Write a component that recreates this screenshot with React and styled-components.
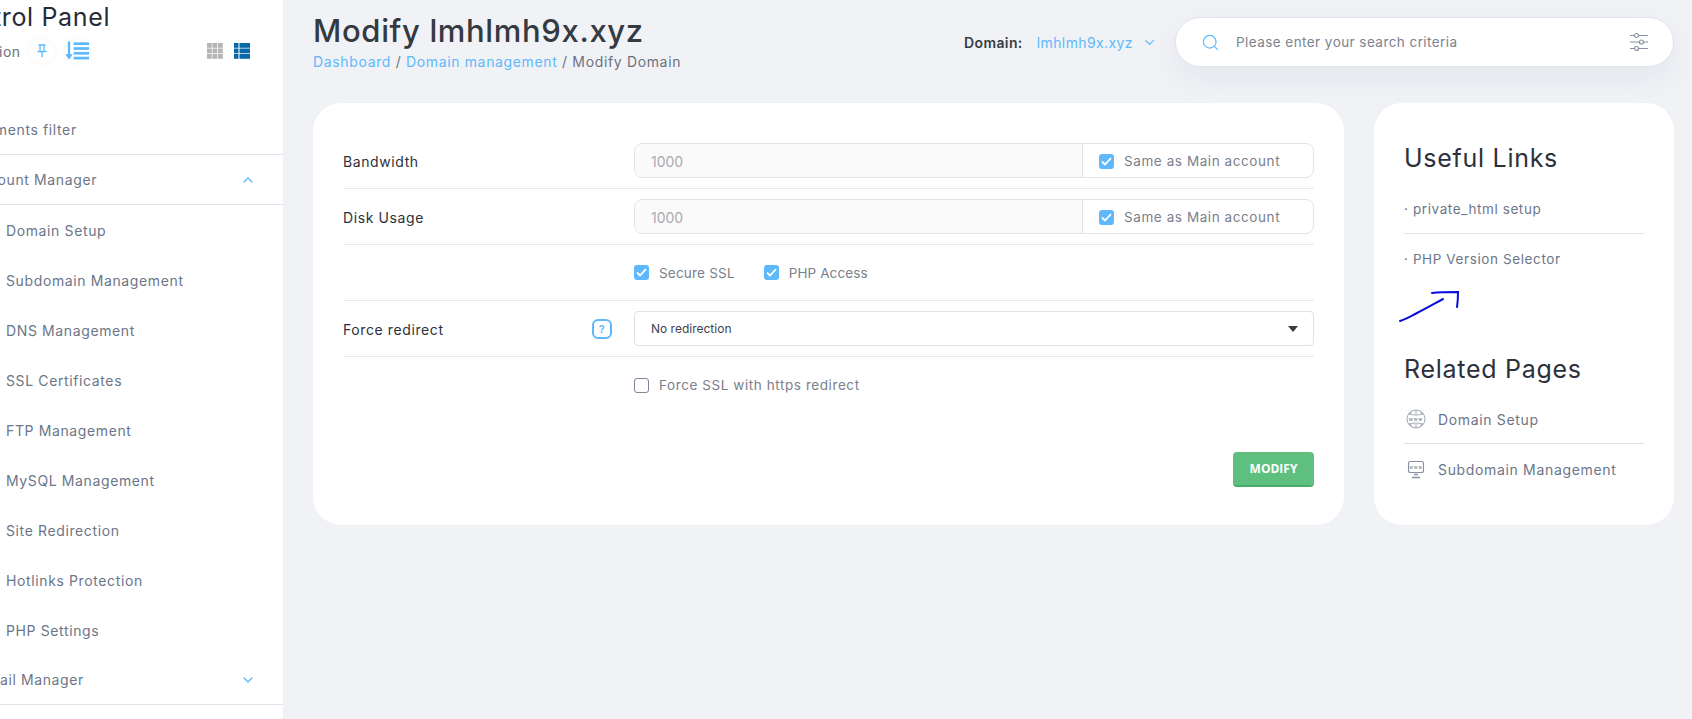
import React from "react";
import styled, { createGlobalStyle } from "styled-components";
import { ChevronDown, ChevronUp, Search } from "lucide-react";

const BLUE = "#5db9fb";
const font = `Inter, "Noto Sans", sans-serif`;

const Global = createGlobalStyle`
  html, body { margin: 0; padding: 0; height: 100%; overflow: hidden; background: #f1f2f6; }
  * { box-sizing: border-box; }
  body { font-family: ${font}; }
`;

const Page = styled.div`
  display: flex;
  height: 719px;
  background: #f1f2f6;
`;

const Sidebar = styled.aside`
  width: 283px;
  flex: none;
  background: #fff;
  overflow: hidden;
`;

const SidebarInner = styled.div`
  width: 343px;
  margin-left: -60px;
`;

const BrandBlock = styled.div`
  height: 105px;
  padding-top: 2px;
`;

const Brand = styled.div`
  font-size: 25px;
  line-height: 30px;
  font-weight: 400;
  color: #262b36;
  letter-spacing: 0.65px;
  padding-left: 3px;
`;

const BrandTools = styled.div`
  display: flex;
  align-items: center;
  margin-top: 3px;
  height: 32px;
  padding-left: 5px;
  padding-right: 33px;
`;

const BrandSub = styled.span`
  font-size: 14px;
  color: #6b7280;
  letter-spacing: 0.5px;
`;

const RoundIcon = styled.span`
  width: 24px;
  height: 24px;
  flex: none;
  border-radius: 50%;
  background: #fff;
  box-shadow: 0 0 6px rgba(120, 130, 150, 0.08);
  display: flex;
  align-items: center;
  justify-content: center;
  margin-left: ${(p) => p.$gap}px;
`;

const ViewIcons = styled.div`
  margin-left: auto;
  display: flex;
  gap: 11px;
`;

const MenuRow = styled.div`
  display: flex;
  align-items: center;
  justify-content: space-between;
  height: 50px;
  padding-left: ${(p) => p.$indent}px;
  padding-right: 27px;
  font-size: 14px;
  color: #6c7689;
  letter-spacing: 0.62px;
  border-bottom: ${(p) => (p.$line ? "1px solid #dfe3ec" : "none")};
`;

const Main = styled.main`
  flex: 1;
  padding: 0 18px 0 30px;
  min-width: 0;
`;

const Header = styled.header`
  display: flex;
  justify-content: space-between;
  height: 103px;
`;

const TitleBlock = styled.div`
  padding-top: 12px;
`;

const Title = styled.h1`
  margin: 0;
  font-size: 31px;
  line-height: 38px;
  font-weight: 500;
  color: #343a42;
  letter-spacing: 0.65px;
`;

const Crumbs = styled.div`
  margin-top: 3px;
  font-size: 14px;
  line-height: 18px;
  color: #6b7280;
  letter-spacing: 0.65px;
`;

const Crumb = styled.span`
  color: ${BLUE};
`;

const HeaderRight = styled.div`
  display: flex;
  align-items: flex-start;
`;

const DomainPick = styled.div`
  display: flex;
  align-items: center;
  height: 50px;
  margin-top: 17px;
  font-size: 14px;
  margin-right: 18px;
`;

const DomainLabel = styled.span`
  font-weight: 600;
  color: #363c46;
  letter-spacing: 0.4px;
  margin-right: 14px;
`;

const DomainValue = styled.span`
  color: ${BLUE};
  letter-spacing: 0.4px;
  margin-right: 9px;
`;

const SearchBar = styled.div`
  width: 499px;
  height: 50px;
  margin-top: 17px;
  display: flex;
  align-items: center;
  background: #fff;
  border: 1px solid #dfe3ec;
  border-radius: 25px;
  padding: 0 24px 0 25px;
  box-shadow: 0 12px 30px rgba(150, 155, 175, 0.12);
  font-size: 13.5px;
  color: #7d8390;
  letter-spacing: 0.44px;
`;

const SearchText = styled.span`
  margin-left: 16px;
  flex: 1;
`;

const Content = styled.div`
  display: flex;
  gap: 30px;
  align-items: flex-start;
`;

const Card = styled.section`
  background: #fff;
  border-radius: 28px;
  height: 422px;
`;

const FormCard = styled(Card)`
  width: 1031px;
  padding: 40px 30px 38px;
  display: flex;
  flex-direction: column;
`;

const Row = styled.div`
  display: grid;
  grid-template-columns: 291px 1fr;
  align-items: center;
  padding: ${(p) => (p.$first ? "0 0 10px" : "10px 0")};
  min-height: ${(p) => (p.$first ? 46 : 56)}px;
  border-bottom: ${(p) => (p.$plain ? "none" : "1px solid #e8e9ec")};
`;

const Label = styled.div`
  display: flex;
  align-items: center;
  justify-content: space-between;
  padding: 1px 22px 0 0;
  font-size: 14px;
  color: #2c313c;
  letter-spacing: 0.6px;
`;

const HelpBadge = styled.span`
  width: 20px;
  height: 20px;
  margin-top: -1px;
  border: 2px solid ${BLUE};
  border-radius: 6px;
  display: flex;
  align-items: center;
  justify-content: center;
  color: ${BLUE};
  font-size: 11px;
  font-weight: 600;
`;

const InputGroup = styled.div`
  display: flex;
  height: 35px;
  border: 1px solid #e3e4e6;
  border-radius: 8px;
  overflow: hidden;
`;

const ValueField = styled.div`
  width: 448px;
  background: #fafafa;
  padding: 1px 0 0 16px;
  display: flex;
  align-items: center;
  color: #a9abaf;
  font-size: 14px;
  border-right: 1px solid #e3e4e6;
`;

const SameAs = styled.div`
  flex: 1;
  display: flex;
  align-items: center;
  padding: 1px 0 0 16px;
`;

const CheckLine = styled.div`
  display: flex;
  align-items: center;
  gap: 29px;
`;

const CheckLabel = styled.label`
  display: flex;
  align-items: center;
  gap: 10px;
  font-size: 13.5px;
  color: #7a808c;
  letter-spacing: ${(p) => p.$spacing ?? 0.58}px;
`;

const Box = styled.span`
  width: 15px;
  height: 15px;
  border-radius: 3px;
  flex: none;
  display: flex;
  align-items: center;
  justify-content: center;
  background: ${(p) => (p.$on ? BLUE : "#fff")};
  border: ${(p) => (p.$on ? "none" : "1px solid #7d8596")};
`;

const Select = styled.div`
  height: 35px;
  border: 1px solid #dfe0e3;
  border-radius: 4px;
  display: flex;
  align-items: center;
  justify-content: space-between;
  padding: 0 15px 0 16px;
  font-size: 12px;
  color: #3f444e;
`;

const Caret = styled.span`
  width: 0;
  height: 0;
  border-left: 5.5px solid transparent;
  border-right: 5.5px solid transparent;
  border-top: 6px solid #3a3d45;
`;

const ButtonRow = styled.div`
  margin-top: auto;
  display: flex;
  justify-content: flex-end;
`;

const ModifyButton = styled.button`
  width: 81px;
  height: 35px;
  border: none;
  border-bottom: 2px solid #47ad6b;
  border-radius: 4px;
  background: #5fbf7f;
  color: #fff;
  font-family: "Open Sans", sans-serif;
  font-weight: 700;
  font-size: 12px;
  padding: 0;
`;

const SideCard = styled(Card)`
  width: 300px;
  padding: 40px 30px 0 30px;
`;

const SideTitle = styled.h2`
  margin: 0;
  font-size: 25px;
  line-height: 30px;
  font-weight: 400;
  color: #2c313c;
  letter-spacing: 0.72px;
`;

const SideLink = styled.div`
  display: flex;
  align-items: center;
  gap: 12px;
  height: ${(p) => p.$h}px;
  font-size: ${(p) => (p.$big ? 14 : 13.5)}px;
  color: #6c7689;
  letter-spacing: ${(p) => (p.$big ? 0.66 : 0.6)}px;
  border-bottom: ${(p) => (p.$line ? "1px solid #dfe3ec" : "none")};

  svg {
    margin-left: 2px;
  }
`;

const LinkList = styled.div`
  margin-top: ${(p) => p.$top}px;
`;

const Scribble = styled.svg`
  display: block;
  width: 60px;
  height: 32px;
  margin: 7px 0 0 -5px;
`;

const SecondTitle = styled(SideTitle)`
  margin-top: 31px;
`;

const Check = () => (
  <svg width="11" height="9" viewBox="0 0 11 9" fill="none">
    <path d="M1 4.5l3 3L10 1.2" stroke="#fff" strokeWidth="1.8" />
  </svg>
);

const PinIcon = () => (
  <svg width="12" height="14" viewBox="0 0 12 14" fill="none" stroke={BLUE} strokeWidth="1.3">
    <path d="M2.5 1h7M4 1v5.5M8 1v5.5M1.5 7.5h9M6 7.5V13.5" />
  </svg>
);

const SortIcon = () => (
  <svg width="25" height="20" viewBox="0 0 25 20" fill={BLUE}>
    <rect x="3" y="0" width="2.4" height="15" />
    <path d="M0.3 13.5h7.8L4.2 19z" />
    <rect x="9" y="1" width="16" height="2.8" />
    <rect x="9" y="6" width="16" height="2.8" />
    <rect x="9" y="11" width="16" height="2.8" />
    <rect x="9" y="16" width="16" height="2.8" />
  </svg>
);

const GridIcon = () => (
  <svg width="16" height="16" viewBox="0 0 16 16" fill="#b5b5b5">
    {[0, 5.5, 11].flatMap((y) =>
      [0, 5.5, 11].map((x) => <rect key={`${x}-${y}`} x={x} y={y} width="4.8" height="4.8" />)
    )}
  </svg>
);

const ListIcon = () => (
  <svg width="16" height="16" viewBox="0 0 16 16" fill="#0b68a8">
    {[0, 5.5, 11].map((y) => (
      <g key={y}>
        <rect x="0" y={y} width="4.5" height="4.8" />
        <rect x="5.5" y={y} width="10.5" height="4.8" />
      </g>
    ))}
  </svg>
);

const SlidersIcon = () => (
  <svg width="20" height="20" viewBox="0 0 20 20" fill="none" stroke="#8a90a0" strokeWidth="1.2">
    <path d="M1 3.5h4.5M9.5 3.5H19M1 10h9.5M14.5 10H19M1 16.5h4.5M9.5 16.5H19" />
    <circle cx="7.5" cy="3.5" r="2" />
    <circle cx="12.5" cy="10" r="2" />
    <circle cx="7.5" cy="16.5" r="2" />
  </svg>
);

const GlobeIcon = () => (
  <svg width="20" height="20" viewBox="0 0 20 20" fill="none" stroke="#8a90a0" strokeWidth="0.8">
    <circle cx="10" cy="10" r="9" />
    <path d="M10 1v4M10 15v4M3 4.5c4 2 10 2 14 0M3 15.5c4-2 10-2 14 0M6 2.5c-1.2 1-2 2-2.4 3.5M14 2.5c1.2 1 2 2 2.4 3.5M6 17.5c-1.2-1-2-2-2.4-3.5M14 17.5c1.2-1 2-2 2.4-3.5" />
    <text x="10" y="11.8" fontSize="5" textAnchor="middle" fill="#6c7689" stroke="none" fontFamily="Inter, sans-serif">www</text>
  </svg>
);

const MonitorIcon = () => (
  <svg width="20" height="20" viewBox="0 0 20 20" fill="none" stroke="#8a90a0" strokeWidth="1.1">
    <rect x="2.5" y="1.5" width="15" height="11" rx="2" />
    <path d="M6 17.5h8M8 14.5h4" strokeWidth="1.4" />
    <text x="10" y="8.6" fontSize="4.6" textAnchor="middle" fill="#6c7689" stroke="none" fontFamily="Inter, sans-serif">www</text>
  </svg>
);

const subItems = [
  "Domain Setup",
  "Subdomain Management",
  "DNS Management",
  "SSL Certificates",
  "FTP Management",
  "MySQL Management",
  "Site Redirection",
  "Hotlinks Protection",
  "PHP Settings",
];

const LimitRow = ({ label, first }) => (
  <Row $first={first}>
    <Label>{label}</Label>
    <InputGroup>
      <ValueField>1000</ValueField>
      <SameAs>
        <CheckLabel>
          <Box $on>
            <Check />
          </Box>
          Same as Main account
        </CheckLabel>
      </SameAs>
    </InputGroup>
  </Row>
);

const App = () => (
  <Page>
    <Global />
    <Sidebar>
      <SidebarInner>
        <BrandBlock>
          <Brand>Control Panel</Brand>
          <BrandTools>
            <BrandSub>Navigation</BrandSub>
            <RoundIcon $gap={9}>
              <PinIcon />
            </RoundIcon>
            <RoundIcon $gap={11}>
              <SortIcon />
            </RoundIcon>
            <ViewIcons>
              <GridIcon />
              <ListIcon />
            </ViewIcons>
          </BrandTools>
        </BrandBlock>
        <MenuRow $line $indent={33}>
          Elements filter
        </MenuRow>
        <MenuRow $line $indent={30}>
          Account Manager
          <ChevronUp size={16} color={BLUE} strokeWidth={2} />
        </MenuRow>
        {subItems.map((item) => (
          <MenuRow $indent={66} key={item}>
            {item}
          </MenuRow>
        ))}
        <MenuRow $line $indent={38}>
          Email Manager
          <ChevronDown size={16} color={BLUE} strokeWidth={2} />
        </MenuRow>
      </SidebarInner>
    </Sidebar>
    <Main>
      <Header>
        <TitleBlock>
          <Title>Modify lmhlmh9x.xyz</Title>
          <Crumbs>
            <Crumb>Dashboard</Crumb> / <Crumb>Domain management</Crumb> / Modify Domain
          </Crumbs>
        </TitleBlock>
        <HeaderRight>
          <DomainPick>
            <DomainLabel>Domain:</DomainLabel>
            <DomainValue>lmhlmh9x.xyz</DomainValue>
            <ChevronDown size={15} color={BLUE} strokeWidth={2} />
          </DomainPick>
          <SearchBar>
            <Search size={19} color={BLUE} strokeWidth={1.5} />
            <SearchText>Please enter your search criteria</SearchText>
            <SlidersIcon />
          </SearchBar>
        </HeaderRight>
      </Header>
      <Content>
        <FormCard>
          <LimitRow first label="Bandwidth" />
          <LimitRow label="Disk Usage" />
          <Row>
            <span />
            <CheckLine>
              <CheckLabel $spacing={0.2}>
                <Box $on>
                  <Check />
                </Box>
                Secure SSL
              </CheckLabel>
              <CheckLabel $spacing={0.1}>
                <Box $on>
                  <Check />
                </Box>
                PHP Access
              </CheckLabel>
            </CheckLine>
          </Row>
          <Row>
            <Label>
              Force redirect
              <HelpBadge>?</HelpBadge>
            </Label>
            <Select>
              No redirection
              <Caret />
            </Select>
          </Row>
          <Row $plain>
            <span />
            <CheckLabel>
              <Box />
              Force SSL with https redirect
            </CheckLabel>
          </Row>
          <ButtonRow>
            <ModifyButton>MODIFY</ModifyButton>
          </ButtonRow>
        </FormCard>
        <SideCard>
          <SideTitle>Useful Links</SideTitle>
          <LinkList $top={11}>
            <SideLink $line $h={50}>· private_html setup</SideLink>
            <SideLink $h={50}>· PHP Version Selector</SideLink>
          </LinkList>
          <Scribble viewBox="0 0 60 32" fill="none" stroke="#0a0ae0" strokeWidth="2" strokeLinecap="round">
            <path d="M1 30c6-2 11-5 17-8 8-4 15-8 26-14" />
            <path d="M33 2c8-1 16-1 26-1 0 5 0 9-1 15" />
          </Scribble>
          <SecondTitle>Related Pages</SecondTitle>
          <LinkList $top={11}>
            <SideLink $line $big $h={49}>
              <GlobeIcon />
              Domain Setup
            </SideLink>
            <SideLink $big $h={51}>
              <MonitorIcon />
              Subdomain Management
            </SideLink>
          </LinkList>
        </SideCard>
      </Content>
    </Main>
  </Page>
);

export default App;
